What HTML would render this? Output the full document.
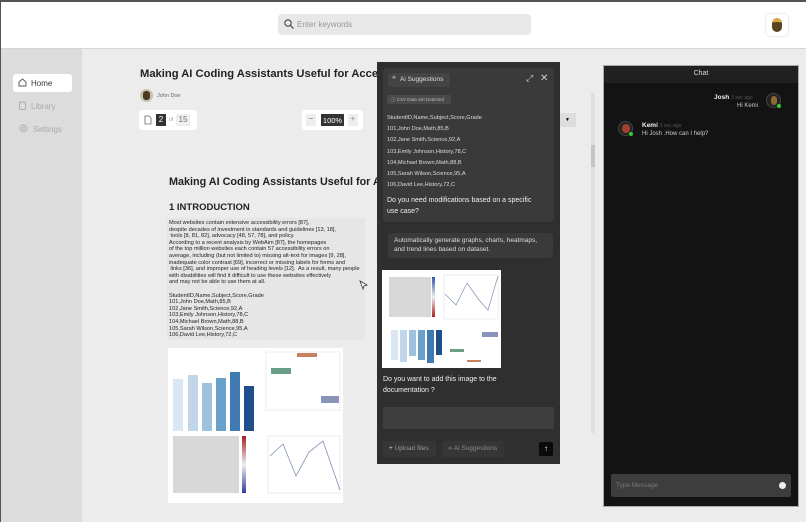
<!DOCTYPE html>
<html><head><meta charset="utf-8"><style>
*{box-sizing:border-box;margin:0;padding:0}
body{width:806px;height:522px;overflow:hidden;background:#ececec;font-family:"Liberation Sans",sans-serif;position:relative;border-left:1px solid #555}
.abs{position:absolute}
.top{left:0;top:0;width:806px;height:49px;background:#fff;border-top:2px solid #555;border-bottom:1px solid #d6d6d6}
.search{left:277px;top:14px;width:253px;height:21px;background:#e8e8e8;border-radius:4px;font-size:8px;color:#999;padding:6px 0 0 19px}
.side{left:0;top:49px;width:81px;height:473px;background:#dcdcdc}
.nav{left:12px;width:59px;height:18px;font-size:8px;color:#aaa;padding:5px 0 0 18px;border-radius:3px}
.dark{background:#2f2f2f}
.t{font-size:6px;color:#ddd}
</style></head><body>
<div class="abs top"></div>
<div class="abs search">Enter keywords
<svg class="abs" style="left:6px;top:5px" width="10" height="10" viewBox="0 0 10 10"><circle cx="4" cy="4" r="3.2" fill="none" stroke="#444" stroke-width="1.1"/><path d="M6.5 6.5L9.5 9.5" stroke="#444" stroke-width="1.2"/></svg></div>
<div class="abs" style="left:765px;top:14px;width:22px;height:22px;background:#fff;border-radius:4px;box-shadow:0 0 2px #ccc"><div class="abs" style="left:6px;top:4px;width:10px;height:14px;border-radius:5px;background:#5a4320;border-top:4px solid #d4a843"></div></div>
<div class="abs side"></div>
<div class="abs nav" style="top:74px;background:#fff;color:#333">Home</div>
<svg class="abs" style="left:17px;top:78px" width="9" height="9" viewBox="0 0 9 9"><path d="M1 8V4L4.5 1L8 4V8Z" fill="none" stroke="#555" stroke-width=".9"/></svg>
<div class="abs nav" style="top:97px">Library</div>
<svg class="abs" style="left:17px;top:101px" width="9" height="9" viewBox="0 0 9 9"><rect x="1.5" y="1" width="6" height="7.5" rx="1" fill="none" stroke="#aaa" stroke-width=".9"/></svg>
<div class="abs nav" style="top:120px;padding-left:20px">Settings</div>
<svg class="abs" style="left:18px;top:124px" width="9" height="9" viewBox="0 0 9 9"><circle cx="4.5" cy="4.5" r="3.5" fill="none" stroke="#aaa" stroke-width=".9"/><circle cx="4.5" cy="4.5" r="1.3" fill="none" stroke="#aaa" stroke-width=".8"/></svg>

<div class="abs" style="left:139px;top:68px;font-size:11.2px;font-weight:bold;color:#222;white-space:nowrap">Making AI Coding Assistants Useful for Accessibility</div>
<div class="abs" style="left:139px;top:89px;width:13px;height:13px;border-radius:50%;background:#c8c0b0"><div class="abs" style="left:3px;top:2px;width:7px;height:9px;border-radius:3px;background:#4a3a20"></div></div>
<div class="abs" style="left:156px;top:93px;font-size:5.5px;color:#666">John Doe</div>
<div class="abs" style="left:138px;top:110px;width:58px;height:20px;background:#fff;border-radius:3px"></div>
<svg class="abs" style="left:143px;top:115px" width="8" height="10" viewBox="0 0 8 10"><path d="M1 1H5L7 3V9H1Z" fill="none" stroke="#666" stroke-width=".8"/></svg>
<div class="abs" style="left:155px;top:114px;width:10px;height:12px;background:#333;color:#fff;font-size:8px;text-align:center;padding-top:1px">2</div>
<div class="abs" style="left:168px;top:117px;font-size:5px;color:#999">of</div>
<div class="abs" style="left:175px;top:114px;width:14px;height:12px;background:#eee;color:#777;font-size:8px;text-align:center;padding-top:1px">15</div>
<div class="abs" style="left:301px;top:110px;width:61px;height:20px;background:#fff;border-radius:3px"></div>
<div class="abs" style="left:305px;top:114px;width:10px;height:12px;background:#eee;color:#666;font-size:8px;text-align:center">−</div>
<div class="abs" style="left:320px;top:114px;width:23px;height:12px;background:#333;color:#fff;font-size:7.5px;text-align:center;padding-top:2px">100%</div>
<div class="abs" style="left:347px;top:114px;width:10px;height:12px;background:#eee;color:#888;font-size:8px;text-align:center">+</div>
<div class="abs" style="left:558px;top:113px;width:17px;height:14px;background:#ddd;font-size:5px;text-align:center;padding-top:4px">▼</div>
<div class="abs" style="left:590px;top:93px;width:4px;height:340px;background:#e0e0e0"><div style="margin-top:52px;height:22px;background:#c4c4c4"></div></div>

<div class="abs" style="left:168px;top:176px;font-size:10.8px;font-weight:bold;color:#222;white-space:nowrap">Making AI Coding Assistants Useful for Accessibility</div>
<div class="abs" style="left:168px;top:202px;font-size:9.5px;font-weight:bold;color:#222">1 INTRODUCTION</div>
<div class="abs" style="left:166px;top:218px;width:198px;height:122px;background:#e6e6e6"></div>
<div class="abs" style="left:168px;top:220px;font-size:5.6px;line-height:6.6px;color:#222;white-space:pre">Most websites contain extensive accessibility errors [87],
despite decades of investment in standards and guidelines [13, 18],
 tools [8, 81, 82], advocacy [48, 57, 78], and policy.
According to a recent analysis by WebAim [87], the homepages
of the top million websites each contain 57 accessibility errors on
average, including (but not limited to) missing alt-text for images [9, 28],
inadequate color contrast [69], incorrect or missing labels for forms and
 links [36], and improper use of heading levels [12].  As a result, many people
with disabilities will find it difficult to use these websites effectively
and may not be able to use them at all.

StudentID,Name,Subject,Score,Grade
101,John Doe,Math,85,B
102,Jane Smith,Science,92,A
103,Emily Johnson,History,78,C
104,Michael Brown,Math,88,B
105,Sarah Wilson,Science,95,A
106,David Lee,History,72,C</div>
<svg class="abs" style="left:358px;top:280px" width="9" height="10" viewBox="0 0 9 10"><path d="M1 1L8 5L5 6L4 9Z" fill="#fff" stroke="#333" stroke-width=".8"/></svg>

<svg class="abs" style="left:167px;top:348px" width="175" height="155" viewBox="0 0 175 155">
<rect width="175" height="155" fill="#fff"/>
<g>
<rect x="5" y="31" width="10" height="52" fill="#dbe6f3"/><rect x="20" y="27" width="10" height="56" fill="#c2d6ea"/><rect x="34" y="35" width="10" height="48" fill="#9ec2dd"/><rect x="48" y="30" width="10" height="53" fill="#6aa1cb"/><rect x="62" y="24" width="10" height="59" fill="#3f7ab3"/><rect x="76" y="38" width="10" height="45" fill="#1f4f8a"/>
<rect x="98" y="4" width="74" height="58" fill="none" stroke="#eee"/>
<rect x="103" y="20" width="20" height="6" fill="#6a9e86"/><rect x="129" y="5" width="20" height="4" fill="#c9805e"/><rect x="153" y="48" width="18" height="7" fill="#8a94b8"/>
<rect x="5" y="88" width="66" height="57" fill="#d8d8d8"/>
<rect x="74" y="88" width="4" height="57" fill="url(#g)"/>
<defs><linearGradient id="g" x1="0" y1="0" x2="0" y2="1"><stop offset="0" stop-color="#a52020"/><stop offset=".5" stop-color="#eee"/><stop offset="1" stop-color="#3040a0"/></linearGradient></defs>
<rect x="100" y="88" width="72" height="57" fill="none" stroke="#eee"/>
<polyline points="102,108 115,96 128,128 141,104 155,93 172,142" fill="none" stroke="#8090b0" stroke-width=".8"/>
</g></svg>

<div class="abs dark" style="left:376px;top:62px;width:183px;height:402px"></div>
<div class="abs" style="left:382px;top:68px;width:171px;height:154px;background:#3a3a3a;border-radius:4px"></div>
<div class="abs" style="left:387px;top:73px;width:62px;height:14px;background:#444;border-radius:2px;font-size:6.5px;color:#ddd;padding:3px 0 0 12px">Ai Suggestions</div>
<div class="abs t" style="left:391px;top:75px;font-size:6px">⟡</div>
<div class="abs" style="left:525px;top:73px;font-size:9px;color:#ccc">⤢</div>
<div class="abs" style="left:539px;top:73px;font-size:10px;color:#ccc">✕</div>
<div class="abs" style="left:386px;top:95px;width:64px;height:9px;background:#4a4a4a;border-radius:2px;font-size:4.5px;color:#bbb;padding:2px 0 0 4px">ⓘ CSV Data Set Detected</div>
<div class="abs t" style="left:386px;top:113px;line-height:11.2px;font-size:5.6px;white-space:pre">StudentID,Name,Subject,Score,Grade
101,John Doe,Math,85,B
102,Jane Smith,Science,92,A
103,Emily Johnson,History,78,C
104,Michael Brown,Math,88,B
105,Sarah Wilson,Science,95,A
106,David Lee,History,72,C</div>
<div class="abs" style="left:386px;top:196px;font-size:7px;line-height:10.5px;color:#f0f0f0">Do you need modifications based on a specific<br>use case?</div>
<div class="abs" style="left:387px;top:233px;width:165px;height:25px;background:#3a3a3a;border-radius:4px;font-size:6.5px;line-height:8.5px;color:#ddd;padding:4px 0 0 6px">Automatically generate graphs, charts, heatmaps,<br>and trend lines based on dataset.</div>
<svg class="abs" style="left:381px;top:270px" width="119" height="98" viewBox="0 0 119 98">
<rect width="119" height="98" fill="#fff"/>
<rect x="7" y="7" width="42" height="40" fill="#d8d8d8"/><rect x="50" y="7" width="3" height="40" fill="url(#g2)"/>
<defs><linearGradient id="g2" x1="0" y1="0" x2="0" y2="1"><stop offset="0" stop-color="#3050b0"/><stop offset=".5" stop-color="#eee"/><stop offset="1" stop-color="#a52020"/></linearGradient></defs>
<rect x="62" y="5" width="54" height="44" fill="none" stroke="#eee"/>
<polyline points="63,24 74,35 85,13 97,30 106,40 116,6" fill="none" stroke="#8090b0" stroke-width=".7"/>
<rect x="9" y="60" width="7" height="30" fill="#dbe6f3"/><rect x="18" y="60" width="7" height="32" fill="#c2d6ea"/><rect x="27" y="60" width="7" height="26" fill="#9ec2dd"/><rect x="36" y="60" width="7" height="30" fill="#6aa1cb"/><rect x="45" y="60" width="7" height="33" fill="#3f7ab3"/><rect x="54" y="60" width="6" height="25" fill="#1f4f8a"/>
<rect x="68" y="79" width="14" height="3" fill="#6a9e86"/><rect x="85" y="90" width="14" height="2" fill="#c9805e"/><rect x="100" y="62" width="16" height="5" fill="#8a94b8"/>
</svg>
<div class="abs" style="left:382px;top:375px;font-size:7px;line-height:10.5px;color:#f0f0f0">Do you want to add this image to the<br>documentation ?</div>
<div class="abs" style="left:382px;top:407px;width:171px;height:22px;background:#3e3e3e"></div>
<div class="abs" style="left:382px;top:441px;width:53px;height:16px;background:#363636;border-radius:2px;font-size:6.5px;color:#999;padding:4px 0 0 6px"><span style="color:#ddd">+</span> Upload files</div>
<div class="abs" style="left:441px;top:441px;width:62px;height:16px;background:#363636;border-radius:2px;font-size:6.5px;color:#888;padding:4px 0 0 6px">⟡ Ai Suggestions</div>
<div class="abs" style="left:538px;top:442px;width:14px;height:14px;background:#0a0a0a;border-radius:2px;color:#fff;font-size:8px;text-align:center;line-height:14px">↑</div>

<div class="abs" style="left:602px;top:65px;width:196px;height:442px;background:#131313;border:1px solid #aaa"></div>
<div class="abs" style="left:603px;top:66px;width:194px;height:17px;background:#202020;font-size:7px;color:#ddd;text-align:center;padding-top:4px">Chat</div>
<div class="abs" style="left:713px;top:94px;font-size:6.5px;color:#eee;font-weight:bold">Josh <span style="font-weight:normal;color:#555;font-size:5px">3 sec ago</span></div>
<div class="abs" style="left:736px;top:103px;font-size:6px;color:#ccc">Hi Kemi</div>
<div class="abs" style="left:765px;top:93px;width:15px;height:15px;border-radius:50%;border:1px solid #444;background:#222"><div class="abs" style="left:4px;top:2px;width:6px;height:9px;border-radius:3px;background:#8a6a30"></div><div class="abs" style="left:10px;top:10px;width:4px;height:4px;border-radius:50%;background:#3c3"></div></div>
<div class="abs" style="left:617px;top:121px;width:15px;height:15px;border-radius:50%;border:1px solid #444;background:#222"><div class="abs" style="left:3px;top:2px;width:8px;height:9px;border-radius:4px;background:#a04030"></div><div class="abs" style="left:10px;top:10px;width:4px;height:4px;border-radius:50%;background:#3c3"></div></div>
<div class="abs" style="left:641px;top:122px;font-size:6.5px;color:#eee;font-weight:bold">Kemi <span style="font-weight:normal;color:#555;font-size:5px">3 sec ago</span></div>
<div class="abs" style="left:641px;top:131px;font-size:6px;color:#ccc">Hi Josh .How can I help?</div>
<div class="abs" style="left:610px;top:474px;width:180px;height:23px;background:#3d3d3d;border-radius:2px;font-size:6.5px;color:#777;padding:8px 0 0 5px">Type Message</div>
<div class="abs" style="left:778px;top:482px;width:7px;height:7px;border-radius:50%;background:#eee"></div>
</body></html>
